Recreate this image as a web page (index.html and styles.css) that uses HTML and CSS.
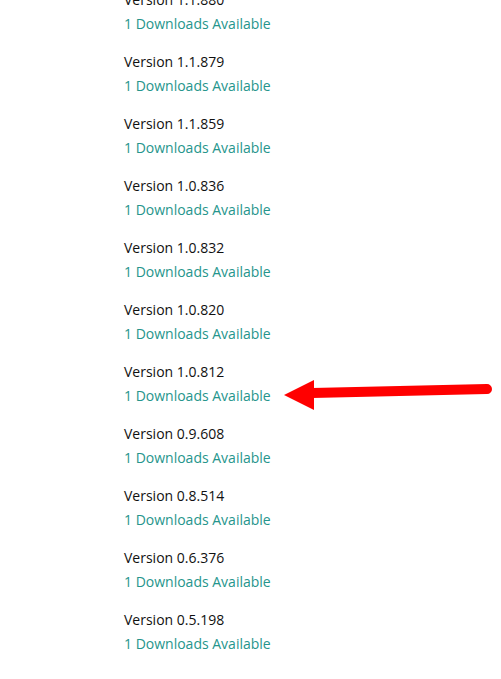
FILE: index.html
```html
<!DOCTYPE html>
<html>
<head>
<meta charset="utf-8">
<link rel="stylesheet" href="styles.css">
</head>
<body>
<div class="page">
  <ul class="versions">
    <li class="item"><div class="ver">Version 1.1.880</div><a class="dl">1 Downloads Available</a></li>
    <li class="item"><div class="ver">Version 1.1.879</div><a class="dl">1 Downloads Available</a></li>
    <li class="item"><div class="ver">Version 1.1.859</div><a class="dl">1 Downloads Available</a></li>
    <li class="item"><div class="ver">Version 1.0.836</div><a class="dl">1 Downloads Available</a></li>
    <li class="item"><div class="ver">Version 1.0.832</div><a class="dl">1 Downloads Available</a></li>
    <li class="item"><div class="ver">Version 1.0.820</div><a class="dl">1 Downloads Available</a></li>
    <li class="item"><div class="ver">Version 1.0.812</div><a class="dl">1 Downloads Available</a></li>
    <li class="item"><div class="ver">Version 0.9.608</div><a class="dl">1 Downloads Available</a></li>
    <li class="item"><div class="ver">Version 0.8.514</div><a class="dl">1 Downloads Available</a></li>
    <li class="item"><div class="ver">Version 0.6.376</div><a class="dl">1 Downloads Available</a></li>
    <li class="item"><div class="ver">Version 0.5.198</div><a class="dl">1 Downloads Available</a></li>
  </ul>
  <svg class="arrow" width="501" height="679" viewBox="0 0 501 679">
    <line x1="312" y1="393" x2="487" y2="389" stroke="#ff0000" stroke-width="10" stroke-linecap="round"/>
    <polygon points="284,395 314,380 314,410" fill="#ff0000"/>
  </svg>
</div>
</body>
</html>
```
FILE: styles.css
```css
html, body {
  margin: 0;
  padding: 0;
  background: #ffffff;
}
body {
  width: 501px;
  height: 679px;
  overflow: hidden;
  font-family: "Open Sans", "Noto Sans", sans-serif;
  font-size: 14px;
}
.page {
  position: relative;
  display: flow-root;
  height: 679px;
}
.versions {
  list-style: none;
  margin: -12px 0 0 0;
  padding: 0 0 0 124px;
  display: flex;
  flex-direction: column;
  gap: 14px;
}
.item {
  display: flex;
  flex-direction: column;
}
.ver {
  line-height: 24px;
  color: #111111;
}
.dl {
  line-height: 24px;
  color: #26958c;
  text-decoration: none;
}
.arrow {
  position: absolute;
  left: 0;
  top: 0;
}
```
